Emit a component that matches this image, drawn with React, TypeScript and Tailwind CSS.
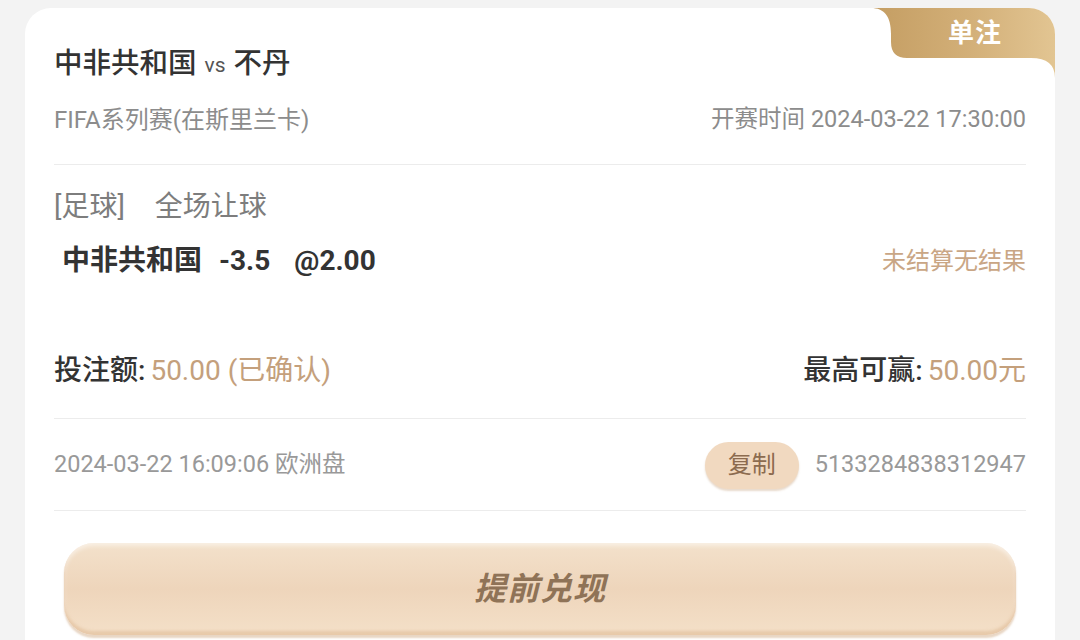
import React from "react"

const font = { fontFamily: "Roboto, 'Noto Sans CJK SC', 'Noto Sans', sans-serif" }

function Badge() {
  return (
    <div className="absolute right-0 top-0 w-[186px] h-[70px]">
      <svg width="186" height="70" viewBox="0 0 186 70" className="absolute inset-0">
        <defs>
          <linearGradient id="gold" x1="0" y1="0" x2="1" y2="0">
            <stop offset="0" stopColor="#c49d62" />
            <stop offset="0.55" stopColor="#d3b079" />
            <stop offset="1" stopColor="#e2c592" />
          </linearGradient>
        </defs>
        <path
          d="M2 0 C 15 0, 22 8, 22 26 L 22 34 Q 22 50, 38 50 L 162 50 Q 186 50, 186 70 L 186 0 Z"
          fill="url(#gold)"
        />
      </svg>
      <div className="absolute left-[22px] right-0 top-0 h-[50px] flex items-center justify-center text-white text-[26px] font-bold tracking-[1px] pl-[4px]">
        单注
      </div>
    </div>
  )
}

export default function App() {
  return (
    <div className="w-[1080px] h-[640px] overflow-hidden bg-[#f3f3f3] pt-[8px] pl-[25px]" style={font}>
      <div className="relative w-[1030px] h-[700px] bg-white rounded-[26px] overflow-hidden px-[29px] pt-[38px]">
        <Badge />

        <div className="h-[36px] flex items-center text-[#333] font-medium">
          <span className="text-[28.5px]">中非共和国</span>
          <span className="text-[21px] font-normal text-[#555] mx-[8px] mt-[3px]">vs</span>
          <span className="text-[28.5px]">不丹</span>
        </div>

        <div className="mt-[22px] h-[32px] flex items-center justify-between text-[#8c8c8c]">
          <span className="text-[24px]">FIFA系列赛(在斯里兰卡)</span>
          <span className="text-[23.5px]">开赛时间 2024-03-22 17:30:00</span>
        </div>

        <div className="mt-[28px] h-px bg-[#ececec]" />

        <div className="mt-[24px] h-[36px] flex items-center text-[28px] text-[#7d7d7d]">
          <span>[足球]</span>
          <span className="ml-[30px]">全场让球</span>
        </div>

        <div className="mt-[18px] h-[36px] flex items-center justify-between">
          <div className="flex items-center text-[28px] font-bold text-[#333] pl-[8px]">
            <span>中非共和国</span>
            <span className="ml-[17px]">-3.5</span>
            <span className="ml-[24px]">@2.00</span>
          </div>
          <span className="text-[24px] text-[#c9a685]">未结算无结果</span>
        </div>

        <div className="mt-[74px] h-[36px] flex items-center justify-between text-[28px]">
          <div className="flex items-center">
            <span className="font-medium text-[#333]">投注额:</span>
            <span className="ml-[5px] text-[#c4a07c]">50.00 (已确认)</span>
          </div>
          <div className="flex items-center">
            <span className="font-medium text-[#333]">最高可赢:</span>
            <span className="ml-[5px] text-[#c4a07c]">50.00元</span>
          </div>
        </div>

        <div className="mt-[29px] h-px bg-[#ececec]" />

        <div className="mt-[22px] h-[48px] flex items-center justify-between text-[23.5px] text-[#999]">
          <span>2024-03-22 16:09:06 欧洲盘</span>
          <div className="flex items-center">
            <button className="w-[94px] h-[47px] rounded-full bg-[#f1d9c0] text-[#8c6b4f] text-[24px] shadow-[0_2px_2px_rgba(190,150,110,0.35)]">
              复制
            </button>
            <span className="ml-[16px]">5133284838312947</span>
          </div>
        </div>

        <div className="mt-[21px] h-px bg-[#ececec]" />

        <div className="mt-[32px] mx-[10px] h-[92px] rounded-[30px] bg-gradient-to-b from-[#f3e1cb] via-[#eed5bb] to-[#f4e0c8] shadow-[inset_0_-4px_3px_rgba(224,186,150,0.6),inset_0_3px_4px_rgba(255,255,255,0.5),0_3px_2px_rgba(205,165,125,0.45)] flex items-center justify-center">
          <span className="text-[32px] font-bold italic text-[#8f7357] tracking-[1px]">提前兑现</span>
        </div>
      </div>
    </div>
  )
}
